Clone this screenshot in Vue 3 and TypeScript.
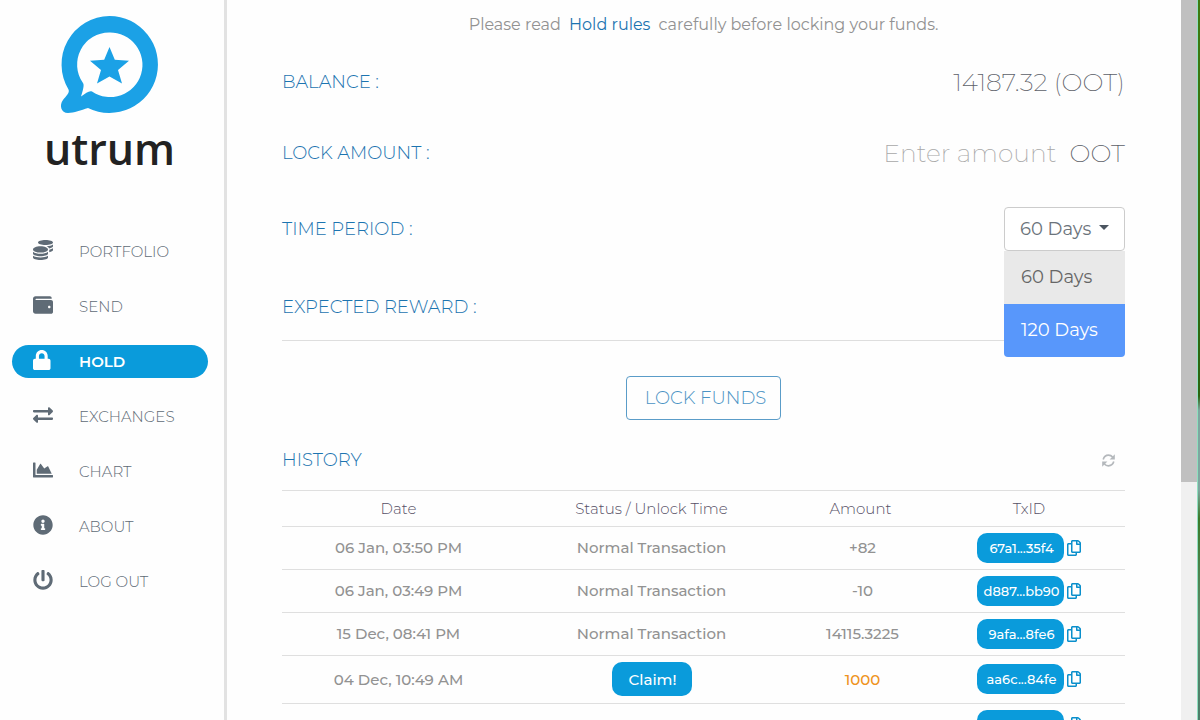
<script setup lang="ts">
import { ref } from 'vue'

interface NavItem {
  label: string
  viewBox: string
  path: string
}

interface HistoryRow {
  date: string
  claim?: boolean
  amount: string
  tx: string
}

const nav: NavItem[] = [
  {
    label: 'PORTFOLIO',
    viewBox: '0 0 512 512',
    path: 'M0 405.3V448c0 35.3 86 64 192 64s192-28.7 192-64v-42.7C342.7 434.4 267.2 448 192 448S41.3 434.4 0 405.3zM320 128c106 0 192-28.7 192-64S426 0 320 0 128 28.7 128 64s86 64 192 64zM0 300.4V352c0 35.3 86 64 192 64s192-28.7 192-64v-51.6c-41.3 34-116.9 51.6-192 51.6S41.3 334.4 0 300.4zm416 11c57.3-11.1 96-31.7 96-55.4v-42.7c-23.2 16.4-57.3 27.6-96 34.5v63.6zM192 160C86 160 0 195.8 0 240s86 80 192 80 192-35.8 192-80-86-80-192-80zm219.3 56.3c60-10.8 100.7-32 100.7-56.3v-42.7c-35.5 25.1-96.5 38.6-160.7 41.8 29.5 14.3 51.2 33.5 60 57.2z'
  },
  {
    label: 'SEND',
    viewBox: '0 0 512 512',
    path: 'M461.2 128H80c-8.84 0-16-7.16-16-16s7.16-16 16-16h384c8.84 0 16-7.16 16-16 0-26.51-21.49-48-48-48H64C28.65 32 0 60.65 0 96v320c0 35.35 28.65 64 64 64h397.2c28.02 0 50.8-21.53 50.8-48V176c0-26.47-22.78-48-50.8-48zM416 336c-17.67 0-32-14.33-32-32s14.33-32 32-32 32 14.33 32 32-14.33 32-32 32z'
  },
  {
    label: 'HOLD',
    viewBox: '0 0 512 512',
    path: 'M400 224h-24v-72C376 68.2 307.8 0 224 0S72 68.2 72 152v72H48c-26.5 0-48 21.5-48 48v192c0 26.5 21.5 48 48 48h352c26.5 0 48-21.5 48-48V272c0-26.5-21.5-48-48-48zm-104 0H152v-72c0-39.7 32.3-72 72-72s72 32.3 72 72v72z'
  },
  {
    label: 'EXCHANGES',
    viewBox: '0 0 512 512',
    path: 'M0 168v-16c0-13.255 10.745-24 24-24h360V80c0-21.367 25.899-32.042 40.971-16.971l80 80c9.372 9.373 9.372 24.569 0 33.941l-80 80C409.956 271.982 384 261.456 384 240v-48H24c-13.255 0-24-10.745-24-24zm488 152H128v-48c0-21.314-25.862-32.08-40.971-16.971l-80 80c-9.372 9.373-9.372 24.569 0 33.941l80 80C102.057 463.997 128 453.437 128 432v-48h360c13.255 0 24-10.745 24-24v-16c0-13.255-10.745-24-24-24z'
  },
  {
    label: 'CHART',
    viewBox: '0 0 512 512',
    path: 'M500 384c6.6 0 12 5.4 12 12v40c0 6.6-5.4 12-12 12H12c-6.6 0-12-5.4-12-12V76c0-6.6 5.4-12 12-12h40c6.6 0 12 5.4 12 12v308h436zM372.7 159.5L288 216l-85.3-113.7c-5.1-6.8-15.5-6.3-19.9 1L96 248v104h384l-89.9-187.8c-3.2-6.5-11.4-8.7-17.4-4.7z'
  },
  {
    label: 'ABOUT',
    viewBox: '0 0 512 512',
    path: 'M256 8C119.043 8 8 119.083 8 256c0 136.997 111.043 248 248 248s248-111.003 248-248C504 119.083 392.957 8 256 8zm0 110c23.196 0 42 18.804 42 42s-18.804 42-42 42-42-18.804-42-42 18.804-42 42-42zm56 254c0 6.627-5.373 12-12 12h-88c-6.627 0-12-5.373-12-12v-24c0-6.627 5.373-12 12-12h12v-64h-12c-6.627 0-12-5.373-12-12v-24c0-6.627 5.373-12 12-12h64c6.627 0 12 5.373 12 12v100h12c6.627 0 12 5.373 12 12v24z'
  },
  {
    label: 'LOG OUT',
    viewBox: '0 0 512 512',
    path: 'M400 54.1c63 45 104 118.6 104 201.9 0 136.8-110.8 247.7-247.5 248C120 504.3 8.2 393 8 256.4 7.9 173.1 48.9 99.3 111.8 54.2c11.7-8.3 28-4.8 35 7.7L162.6 90c5.9 10.5 3.1 23.8-6.6 31-41.5 30.8-68 79.6-68 134.9-.1 92.3 74.5 168.1 168 168.1 91.6 0 168.6-74.2 168-169.1-.3-51.8-24.7-101.8-68.1-134-9.7-7.2-12.4-20.5-6.5-30.9l15.8-28.1c7-12.4 23.2-16.1 34.8-7.8zM296 264V24c0-13.3-10.7-24-24-24h-32c-13.3 0-24 10.7-24 24v240c0 13.3 10.7 24 24 24h32c13.3 0 24-10.7 24-24z'
  }
]

const active = ref('HOLD')
const amount = ref('')
const periods = ['60 Days', '120 Days']
const period = ref('60 Days')
const menuOpen = ref(true)

function choose(value: string) {
  period.value = value
  menuOpen.value = false
}

const rows: HistoryRow[] = [
  { date: '06 Jan, 03:50 PM', amount: '+82', tx: '67a1...35f4' },
  { date: '06 Jan, 03:49 PM', amount: '-10', tx: 'd887...bb90' },
  { date: '15 Dec, 08:41 PM', amount: '14115.3225', tx: '9afa...8fe6' },
  { date: '04 Dec, 10:49 AM', claim: true, amount: '1000', tx: 'aa6c...84fe' },
  { date: '', amount: '', tx: '' }
]
</script>

<template>
  <div class="app">
    <aside class="sidebar">
      <div class="brand">
        <svg class="mark" viewBox="0 0 98 98" aria-hidden="true">
          <path
            fill="#1ba1e6"
            fill-rule="evenodd"
            d="M48.500 0a48.500 48.500 0 1 1-21.500 92C20 94 13 97 7 97C0 97 -2 89 2 84C5 80 9 77 7.500 73.500A48.500 48.500 0 0 1 48.500 0ZM48.500 16.500A32 32 0 0 0 22 67C23.500 69 22 74 20 80.500C25 77 28 74.500 31 75.500A32.300 32.300 0 1 0 48.500 16.500Z"
          />
          <path fill="#1ba1e6" d="M48.500 31l5.300 12.700 14.200 1-11 9.200 4 13.600L48.500 60.500l-12.500 7 4-13.600-11-9.200 14.200-1z" />
        </svg>
        <span class="wordmark">utrum</span>
      </div>
      <nav class="nav">
        <a
          v-for="item in nav"
          :key="item.label"
          href="#"
          class="nav-item"
          :class="{ active: item.label === active }"
          @click.prevent="active = item.label"
        >
          <svg :viewBox="item.viewBox" aria-hidden="true"><path :d="item.path" fill="currentColor" /></svg>
          <span>{{ item.label }}</span>
        </a>
      </nav>
    </aside>

    <main class="main">
      <p class="note">Please read <a href="#">Hold rules</a> carefully before locking your funds.</p>

      <div class="row balance">
        <span class="label">BALANCE :</span>
        <span class="value">14187.32 (OOT)</span>
      </div>
      <div class="row lock">
        <label class="label" for="amount">LOCK AMOUNT :</label>
        <span class="amount">
          <input id="amount" v-model="amount" type="text" placeholder="Enter amount" />
          <span class="value unit">OOT</span>
        </span>
      </div>
      <div class="row period">
        <label class="label" for="period">TIME PERIOD :</label>
        <div class="dropdown">
          <select id="period" v-model="period">
            <option v-for="p in periods" :key="p">{{ p }}</option>
          </select>
          <svg class="caret" viewBox="0 0 10 5" aria-hidden="true"><path d="M0 0h10L5 5z" fill="#4b5560" /></svg>
          <div v-if="menuOpen" class="menu">
            <button
              v-for="(p, i) in periods"
              :key="p"
              type="button"
              :class="{ hover: i === 1 }"
              @click="choose(p)"
            >{{ p }}</button>
          </div>
        </div>
      </div>
      <div class="row reward">
        <span class="label">EXPECTED REWARD :</span>
      </div>

      <button type="button" class="lock-btn">LOCK FUNDS</button>

      <div class="history-head">
        <h2 class="label">HISTORY</h2>
        <button type="button" class="refresh" aria-label="Refresh">
          <svg viewBox="0 0 14 14" aria-hidden="true">
            <path
              d="M1.300 5.800C2.200 2.800 4.400 1.300 7 1.300c1.900 0 3.300.7 4.400 2M12.700 8.200c-.9 3-3.100 4.500-5.700 4.500-1.900 0-3.300-.7-4.400-2"
              fill="none"
              stroke="currentColor"
              stroke-width="1.800"
            />
            <path d="M13.800.4v5.600H8.200zM.2 13.600V8h5.600z" fill="currentColor" />
          </svg>
        </button>
      </div>

      <table class="history">
        <thead>
          <tr>
            <th class="c-date">Date</th>
            <th class="c-status">Status / Unlock Time</th>
            <th class="c-amount">Amount</th>
            <th class="c-tx">TxID</th>
          </tr>
        </thead>
        <tbody>
          <tr v-for="(r, i) in rows" :key="i" :class="{ tall: r.claim }">
            <td>{{ r.date }}</td>
            <td>
              <button v-if="r.claim" type="button" class="claim">Claim!</button>
              <template v-else-if="r.date">Normal Transaction</template>
            </td>
            <td class="num" :class="{ pending: r.claim }">{{ r.amount }}</td>
            <td>
              <span class="tx">
                <a href="#" class="pill">{{ r.tx }}</a>
                <button type="button" class="copy" aria-label="Copy">
                  <svg viewBox="0 0 448 512" aria-hidden="true">
                    <path
                      fill="currentColor"
                      d="M433.941 65.941l-51.882-51.882A48 48 0 0 0 348.118 0H176c-26.510 0-48 21.490-48 48v48H48c-26.510 0-48 21.490-48 48v320c0 26.510 21.490 48 48 48h224c26.510 0 48-21.490 48-48v-48h80c26.510 0 48-21.490 48-48V99.882a48 48 0 0 0-14.059-33.941zM266 464H54a6 6 0 0 1-6-6V150a6 6 0 0 1 6-6h74v224c0 26.510 21.490 48 48 48h96v42a6 6 0 0 1-6 6zm128-96H182a6 6 0 0 1-6-6V54a6 6 0 0 1 6-6h106v88c0 13.255 10.745 24 24 24h88v202a6 6 0 0 1-6 6zm6-256h-64V48h9.632c1.591 0 3.117.632 4.243 1.757l48.368 48.368a6 6 0 0 1 1.757 4.243V112z"
                    />
                  </svg>
                </button>
              </span>
            </td>
          </tr>
        </tbody>
      </table>
    </main>

    <div class="scrollbar" aria-hidden="true"><div class="thumb"></div></div>
    <div class="edge" aria-hidden="true"></div>
  </div>
</template>

<style>
body {
  margin: 0;
  overflow: hidden;
  background: #fff;
}
</style>

<style scoped>
.app {
  display: flex;
  height: 100vh;
  overflow: hidden;
  background: #fefefe;
  font-family: Montserrat, Inter, "Liberation Sans", sans-serif;
  color: #929292;
}
.app * {
  box-sizing: border-box;
}
a {
  text-decoration: none;
  color: #1c74b0;
}
button,
input,
select {
  font: inherit;
  color: inherit;
  border: 0;
  margin: 0;
  padding: 0;
  background: none;
  outline: none;
  cursor: pointer;
}

.sidebar {
  flex: 0 0 227px;
  border-right: 3px solid #e2e2e2;
  padding: 16px 16px 0 12px;
}
.brand {
  display: flex;
  flex-direction: column;
  align-items: center;
  height: 219px;
  padding-right: 1px;
}
.mark {
  width: 98px;
  height: 98px;
  overflow: visible;
}
.wordmark {
  font-family: "Open Sans", "Noto Sans", sans-serif;
  font-weight: 600;
  font-size: 43px;
  line-height: 62px;
  margin-top: 4px;
  color: #222;
}
.nav {
  display: flex;
  flex-direction: column;
  gap: 22px;
}
.nav-item {
  display: flex;
  align-items: center;
  height: 33px;
  padding: 0 21px;
  gap: 26px;
  border-radius: 17px;
  font-size: 15px;
  font-weight: 300;
  color: #5f6b76;
}
.nav-item svg {
  width: 20px;
  height: 20px;
  margin-bottom: 4px;
}
.nav-item.active {
  background: #0a9bdb;
  color: #fff;
  font-weight: 600;
}

.main {
  flex: 1;
  min-width: 0;
  padding: 0 56px 0 55px;
  display: flex;
  flex-direction: column;
}
.note {
  margin: 0;
  padding-top: 2px;
  text-align: center;
  font-size: 16px;
  font-weight: 400;
  line-height: 46px;
}
.note a {
  margin: 0 4px;
}
.row {
  flex: none;
  display: flex;
  align-items: center;
  justify-content: space-between;
}
.balance { height: 68px; }
.lock { height: 74px; }
.period { height: 77px; }
.reward {
  height: 74px;
  padding-top: 6px;
  border-bottom: 1px solid #dedede;
}
.label {
  margin: 0;
  font-size: 18px;
  font-weight: 300;
  color: #1c74b0;
}
.value {
  font-size: 25px;
  font-weight: 200;
  color: #5c6068;
}
.amount {
  display: flex;
  align-items: center;
  gap: 13px;
}
.amount input {
  width: 220px;
  text-align: right;
  font-size: 25px;
  font-weight: 200;
  cursor: text;
}
.amount input::placeholder {
  color: #a8a8a8;
  opacity: 1;
}
.dropdown {
  position: relative;
  width: 121px;
}
.dropdown select {
  display: block;
  width: 100%;
  height: 44px;
  padding: 0 15px;
  appearance: none;
  border: 1px solid #ccc;
  border-radius: 4px;
  background: #fff;
  font-size: 18px;
  color: #6b737b;
}
.caret {
  position: absolute;
  right: 16px;
  top: 18px;
  width: 10px;
  height: 5px;
  pointer-events: none;
}
.menu {
  position: absolute;
  z-index: 2;
  top: 44px;
  left: 0;
  width: 100%;
  border-radius: 0 0 4px 4px;
  overflow: hidden;
}
.menu button {
  display: block;
  width: 100%;
  height: 53px;
  padding-left: 17px;
  text-align: left;
  font-size: 18px;
  background: #e9e9e9;
  color: #666;
}
.menu button.hover {
  background: #5897fb;
  color: #fff;
}
.lock-btn {
  flex: none;
  align-self: center;
  margin-top: 35px;
  width: 155px;
  height: 44px;
  padding-left: 4px;
  border: 1px solid #5a9cc8;
  border-radius: 4px;
  font-size: 18px;
  font-weight: 300;
  color: #4a93c4;
}
.history-head {
  flex: none;
  display: flex;
  align-items: center;
  justify-content: space-between;
  height: 70px;
  padding: 10px 10px 0 0;
}
.refresh {
  display: flex;
  color: #b4b8bc;
}
.refresh svg {
  width: 13px;
  height: 13px;
}
.history {
  width: 100%;
  table-layout: fixed;
  border-collapse: collapse;
  border-top: 1px solid #dfdfdf;
  text-align: center;
  font-size: 15px;
}
.history th {
  height: 36px;
  padding: 0;
  font-weight: 300;
  color: #565066;
  border-bottom: 1px solid #dfdfdf;
}
.history td {
  height: 43px;
  padding: 0 0 1px;
  font-weight: 500;
  border-bottom: 1px solid #dfdfdf;
}
.history .tall td {
  height: 48px;
}
.c-date { width: 233px; }
.c-amount { width: 145px; }
.c-tx { width: 192px; }
.history .num {
  padding-left: 4px;
}
.history .pending {
  color: #ee9320;
}
.claim {
  width: 80px;
  height: 34px;
  padding-left: 2px;
  border-radius: 10px;
  background: #0a9bdb;
  color: #fff;
}
.tx {
  display: flex;
  align-items: center;
  justify-content: center;
  gap: 3px;
}
.pill {
  width: 87px;
  height: 30px;
  padding-left: 2px;
  border-radius: 10px;
  background: #0a9bdb;
  color: #fff;
  font-size: 13px;
  line-height: 30px;
}
.copy {
  display: flex;
  color: #0a8fcc;
}
.copy svg {
  width: 14px;
  height: 16px;
}

.scrollbar {
  flex: 0 0 16px;
  background: #f0f0f0;
}
.thumb {
  height: 67%;
  background: #c0c0c0;
}
.edge {
  flex: 0 0 3px;
  background: linear-gradient(#3f7a10, #2b6410 55%, #7fa6a0 57%, #7fa6a0 68%, #3b7a2a 72%, #5b8a6a 86%, #4d7d6a);
  border-left: 1px solid #8fe0c0;
}
</style>
